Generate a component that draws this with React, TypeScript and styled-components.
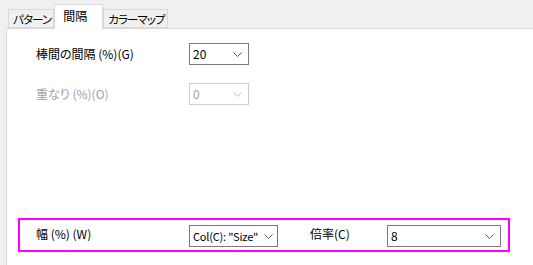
import React from "react";
import styled, { createGlobalStyle } from "styled-components";

const Global = createGlobalStyle`
  html, body { margin: 0; padding: 0; }
  body {
    width: 533px; height: 265px; overflow: hidden;
    background: #f0f0f0;
    font-family: "Noto Sans CJK JP", "Noto Sans", sans-serif;
    font-size: 12px; color: #000;
    font-feature-settings: "palt";
  }
`;

const Root = styled.div`
  display: flex; flex-direction: column;
  width: 533px; height: 265px;
  padding: 5px 0 0 6px; box-sizing: border-box;
`;

const TabBar = styled.div`
  display: flex; align-items: flex-end;
  height: 23px; padding-left: 2px;
  position: relative; z-index: 1;
`;

const Tab = styled.div<{ $active?: boolean }>`
  box-sizing: border-box;
  height: ${(p) => (p.$active ? 25 : 19)}px;
  margin-bottom: ${(p) => (p.$active ? -1 : 0)}px;
  background: ${(p) => (p.$active ? "#ffffff" : "#f0f0f0")};
  border: 1px solid #d9d9d9;
  border-bottom: ${(p) => (p.$active ? "none" : "1px solid #d9d9d9")};
  display: flex; align-items: ${(p) => (p.$active ? "flex-start" : "center")};
  padding: ${(p) => (p.$active ? "3px 15px 0 8px" : "0 2px 0 4px")};
  font-size: ${(p) => (p.$active ? 12 : 11.5)}px;
  letter-spacing: ${(p) => (p.$active ? 0 : -0.9)}px;
  line-height: 16px; white-space: nowrap;
`;

const Panel = styled.div`
  flex: 1;
  background: #ffffff;
  border: 1px solid #d9d9d9;
  border-right: none; border-bottom: none;
  display: flex; flex-direction: column;
  padding: 14px 0 0 0;
`;

const Form = styled.div`
  display: grid;
  grid-template-columns: 153px auto;
  row-gap: 18px;
  padding-left: 29px;
  align-items: center;
`;

const Label = styled.div<{ $disabled?: boolean }>`
  color: ${(p) => (p.$disabled ? "#a0a0a0" : "#000")};
  line-height: 16px; white-space: nowrap;
`;

const Select = styled.div<{ $w: number; $disabled?: boolean }>`
  box-sizing: border-box;
  width: ${(p) => p.$w}px; height: 22px;
  border: 1px solid ${(p) => (p.$disabled ? "#cccccc" : "#7a7a7a")};
  background: #fff;
  display: flex; align-items: center;
  padding: 0 6px 0 3px;
  color: ${(p) => (p.$disabled ? "#a0a0a0" : "#000")};
  font-size: 12px;
`;

const SelectText = styled.span<{ $tight?: boolean }>`
  flex: 1; overflow: hidden; white-space: nowrap;
  line-height: 16px;
  font-size: ${(p) => (p.$tight ? 11 : 12)}px;
  letter-spacing: ${(p) => (p.$tight ? "-0.2px" : "0")};
`;

const Chevron = ({ disabled }: { disabled?: boolean }) => (
  <svg width="9" height="5" viewBox="0 0 9 5" style={{ flex: "none", marginLeft: 2 }}>
    <path d="M0.5 0.5 L4.5 4.5 L8.5 0.5" fill="none" stroke={disabled ? "#c4c4c4" : "#5a5a5a"} strokeWidth="1" />
  </svg>
);

const Spacer = styled.div`
  height: 113px;
`;

const Highlight = styled.div`
  margin-left: 11px;
  width: 492px; height: 34px;
  box-sizing: border-box;
  border: 2.5px solid #ff00ff;
  display: flex; align-items: flex-start;
  padding: 5px 0 0 16px;
`;

const HLabel = styled(Label)<{ $w: number }>`
  width: ${(p) => p.$w}px;
  margin-top: 1px;
`;

export default function App() {
  return (
    <>
      <Global />
      <Root>
        <TabBar>
          <Tab>パターン</Tab>
          <Tab $active>間隔</Tab>
          <Tab>カラーマップ</Tab>
        </TabBar>
        <Panel>
          <Form>
            <Label>棒間の間隔 (%)(G)</Label>
            <Select $w={60}>
              <SelectText>20</SelectText>
              <Chevron />
            </Select>
            <Label $disabled>重なり (%)(O)</Label>
            <Select $w={60} $disabled>
              <SelectText>0</SelectText>
              <Chevron disabled />
            </Select>
          </Form>
          <Spacer />
          <Highlight>
            <HLabel $w={153}>幅 (%) (W)</HLabel>
            <Select $w={89} style={{ paddingRight: 4 }}>
              <SelectText $tight>Col(C): "Size"</SelectText>
              <Chevron />
            </Select>
            <HLabel $w={77} style={{ marginLeft: 32 }}>倍率(C)</HLabel>
            <Select $w={114}>
              <SelectText>8</SelectText>
              <Chevron />
            </Select>
          </Highlight>
        </Panel>
      </Root>
    </>
  );
}
